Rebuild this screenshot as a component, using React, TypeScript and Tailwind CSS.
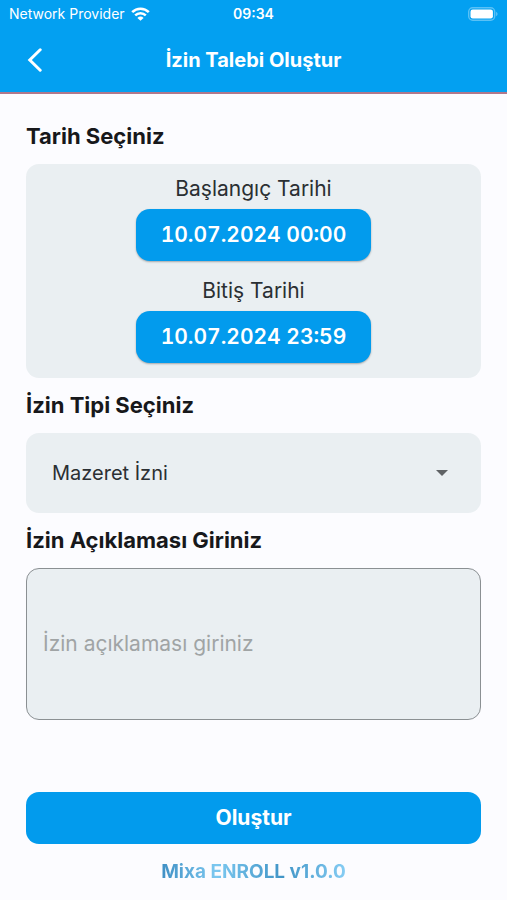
import { useState } from "react";

const leaveTypes = ["Mazeret İzni", "Yıllık İzin", "Ücretsiz İzin"];

function StatusBar() {
  return (
    <div className="grid grid-cols-3 items-center px-[9px] h-7 text-[14px] leading-5">
      <div className="flex items-center gap-1.5 whitespace-nowrap">
        <span>Network Provider</span>
        <svg className="w-[19px] h-[14px] shrink-0" viewBox="0 0 19 14" fill="none" stroke="currentColor">
          <path d="M1.2 5.1a11.8 11.8 0 0 1 16.6 0" strokeWidth="2.6" />
          <path d="M4.2 8.4a7.5 7.5 0 0 1 10.6 0" strokeWidth="2.5" />
          <path d="M9.5 13.8 6.4 10.9a4.4 4.4 0 0 1 6.2 0Z" fill="currentColor" stroke="none" />
        </svg>
      </div>
      <span className="text-center font-semibold">09:34</span>
      <svg className="w-[30px] h-[14px] justify-self-end" viewBox="0 0 30 14" fill="none">
        <rect x="0.7" y="0.7" width="26" height="12.6" rx="4" stroke="#fff" strokeOpacity="0.35" strokeWidth="1.4" />
        <rect x="2.5" y="2.5" width="22.4" height="9" rx="2.2" fill="#fff" />
        <path d="M28.2 4.8c1.8.8 1.8 3.6 0 4.4Z" fill="#fff" fillOpacity="0.4" />
      </svg>
    </div>
  );
}

function DateField({ id, label, value }: { id: string; label: string; value: string }) {
  return (
    <div className="flex flex-col items-center gap-[5px]">
      <span id={id} className="text-[21px] leading-[30px]">
        {label}
      </span>
      <button
        type="button"
        aria-describedby={id}
        className="h-[52px] px-[25px] rounded-[14px] bg-[#029bed] text-white text-[21px] font-semibold tabular-nums shadow-[0_1px_2px_rgba(0,0,0,0.3)]"
      >
        {value}
      </button>
    </div>
  );
}

export default function App() {
  const [leaveType, setLeaveType] = useState(leaveTypes[0]);
  const [description, setDescription] = useState("");

  return (
    <div className="min-h-screen flex flex-col bg-[#fcfcff] text-[#2b2f33] font-['Inter','Liberation_Sans',sans-serif]">
      <header className="bg-[#03a0f1] text-white border-b-2 border-[#b0788c]">
        <StatusBar />
        <div className="grid grid-cols-[40px_1fr_40px] items-center h-16 px-[18px]">
          <button type="button" aria-label="Geri" className="flex items-center justify-center h-10 w-[34px]">
            <svg className="w-4 h-6" viewBox="0 0 16 24" fill="none" stroke="currentColor" strokeWidth="3">
              <path d="M13.2 1.8 2.8 12l10.4 10.2" strokeLinecap="round" strokeLinejoin="miter" />
            </svg>
          </button>
          <h1 className="text-center text-[20px] font-bold">İzin Talebi Oluştur</h1>
        </div>
      </header>

      <form className="flex-1 flex flex-col px-[26px] pt-[15px]" onSubmit={(e) => e.preventDefault()}>
        <h2 className="py-3.5 text-[22px] leading-[27px] font-bold text-[#17181b]">Tarih Seçiniz</h2>
        <div className="flex flex-col gap-[15px] rounded-[13px] bg-[#eaeff2] pt-2.5 pb-[15px]">
          <DateField id="start-date" label="Başlangıç Tarihi" value="10.07.2024 00:00" />
          <DateField id="end-date" label="Bitiş Tarihi" value="10.07.2024 23:59" />
        </div>

        <label htmlFor="leave-type" className="py-3.5 text-[22px] leading-[27px] font-bold text-[#17181b]">
          İzin Tipi Seçiniz
        </label>
        <div className="relative">
          <select
            id="leave-type"
            value={leaveType}
            onChange={(e) => setLeaveType(e.target.value)}
            className="block w-full h-20 appearance-none rounded-[13px] bg-[#eaeff2] px-[26px] text-[20px]"
          >
            {leaveTypes.map((type) => (
              <option key={type}>{type}</option>
            ))}
          </select>
          <svg
            className="pointer-events-none absolute right-[33px] top-1/2 w-3 h-1.5 -translate-y-1/2 fill-[#5f6265]"
            viewBox="0 0 12 6"
          >
            <path d="M0 0h12L6 6Z" />
          </svg>
        </div>

        <label htmlFor="description" className="py-3.5 text-[22px] leading-[27px] font-bold text-[#17181b]">
          İzin Açıklaması Giriniz
        </label>
        <textarea
          id="description"
          rows={1}
          value={description}
          onChange={(e) => setDescription(e.target.value)}
          placeholder="İzin açıklaması giriniz"
          className="block w-full resize-none rounded-[13px] border border-[#8b9093] bg-[#eaeff2] px-4 py-[61px] text-[21px] leading-7 placeholder:text-[#a0a4a5]"
        />

        <button
          type="submit"
          className="mt-auto h-[52px] shrink-0 rounded-[13px] bg-[#029bed] text-white text-[21px] font-bold"
        >
          Oluştur
        </button>
      </form>

      <footer className="flex justify-center pt-4 pb-4 text-[19px] leading-6 font-bold">
        <span className="bg-clip-text text-transparent bg-[linear-gradient(90deg,#3f8fc4_0%,#7cc8f0_30%,#4094c6_66%,#86cdf4_100%)]">
          Mixa ENROLL v1.0.0
        </span>
      </footer>
    </div>
  );
}
